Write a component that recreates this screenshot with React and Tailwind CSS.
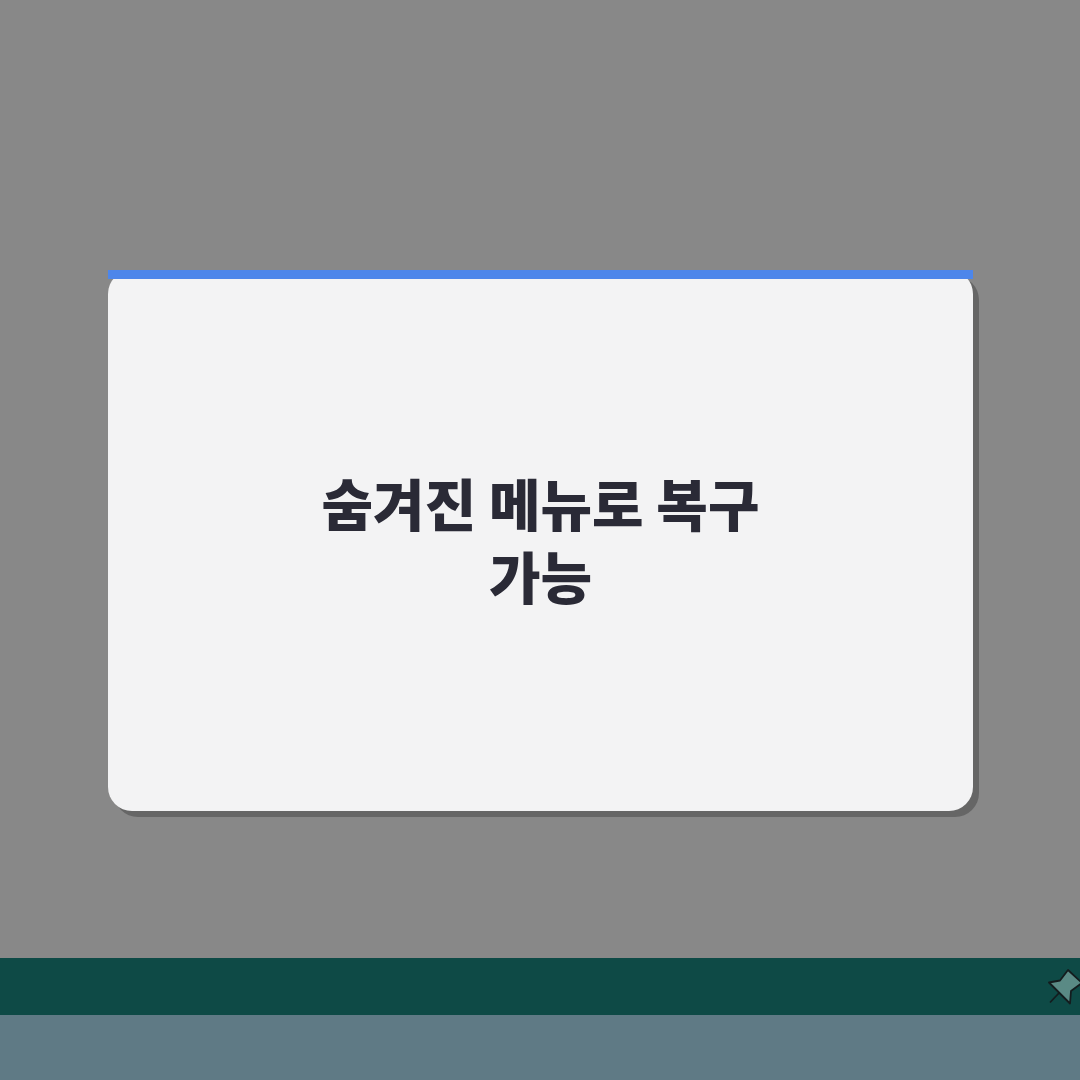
export default function App() {
  return (
    <div className="w-[1080px] h-[1080px] overflow-hidden flex flex-col bg-[#888888]" style={{ fontFamily: '"Noto Sans CJK KR", "Noto Sans", sans-serif' }}>
      <div className="h-[958px] pt-[270px] pl-[108px]">
        <div className="relative w-[865px] h-[541px] pb-[5px] bg-[#f3f3f4] rounded-[24px] shadow-[6px_6px_0_#666666] flex items-center justify-center">
          <div className="absolute top-0 left-0 right-0 h-[9px] bg-[#4d86ea]"></div>
          <h1 className="w-[520px] text-center text-[56px] leading-[73px] font-black text-[#2a2a36] break-keep">
            숨겨진 메뉴로 복구<br />가능
          </h1>
        </div>
      </div>
      <div className="h-[57px] bg-[#0e4a46] flex justify-end items-center">
        <svg width="35" height="40" viewBox="0 0 35 40" className="shrink-0">
          <path d="M4 15.5 L15 13.5 L23 3 L37 16 L26 24 L25 36.5 Z" fill="#5a8a85" stroke="#141c1e" strokeWidth="1.8" strokeLinejoin="round" />
          <path d="M14 26 L5 35.5" fill="none" stroke="#141c1e" strokeWidth="1.8" />
        </svg>
      </div>
      <div className="flex-1 bg-[#5f7a85]"></div>
    </div>
  );
}
